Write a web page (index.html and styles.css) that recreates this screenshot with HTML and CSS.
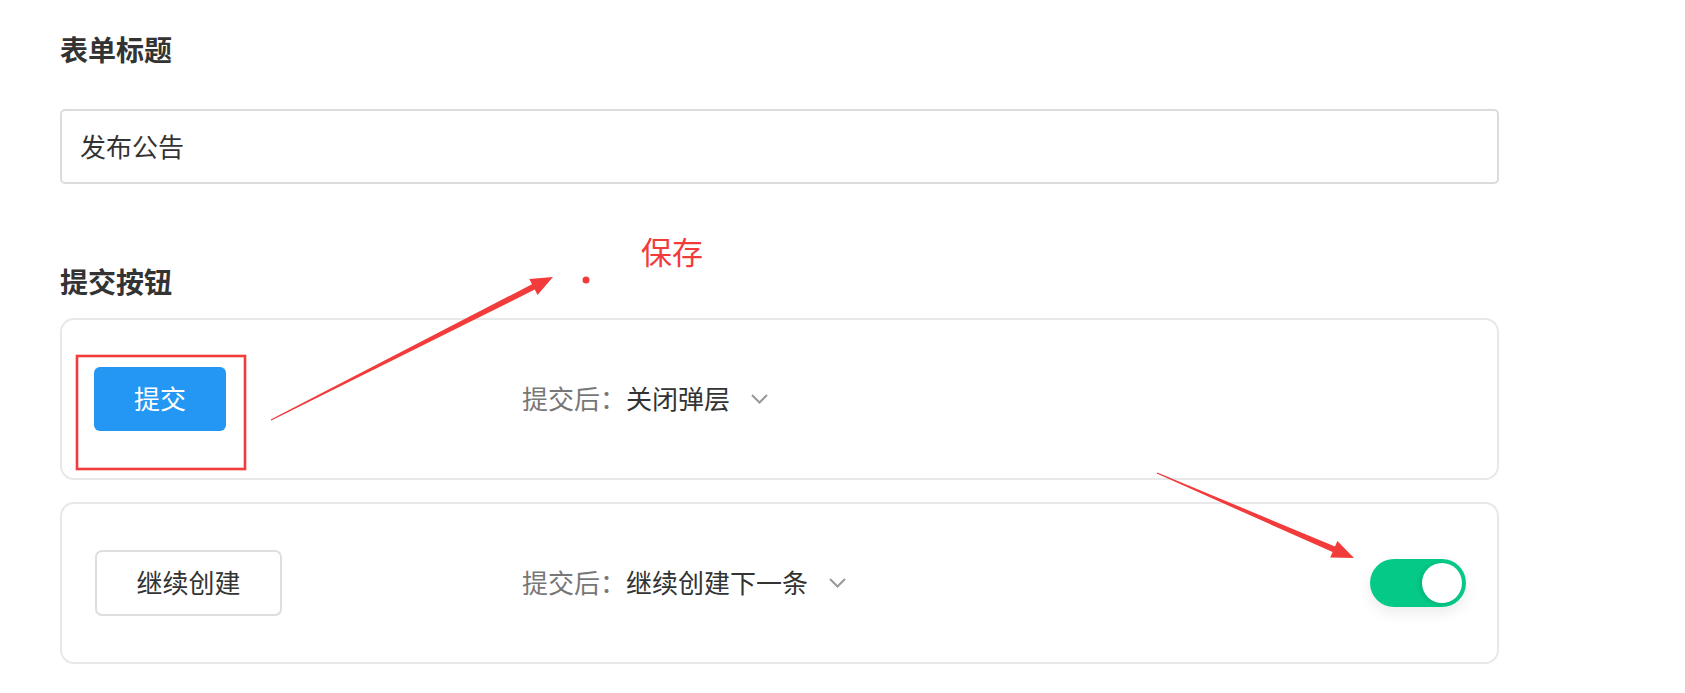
FILE: index.html
```html
<!DOCTYPE html>
<html lang="zh-CN">
<head>
<meta charset="utf-8">
<title>表单设置</title>
<link rel="stylesheet" href="styles.css">
</head>
<body>
<div class="page">
  <div class="content">
    <section class="field">
      <h2 class="field-title">表单标题</h2>
      <div class="text-input">发布公告</div>
    </section>
    <section class="field field-buttons">
      <h2 class="field-title">提交按钮</h2>
      <div class="card-list">
        <div class="btn-card">
          <div class="btn-cell"><button class="btn btn-primary">提交</button></div>
          <div class="after">提交后：<span class="value">关闭弹层</span>
            <svg class="chevron" viewBox="0 0 17 10" width="17" height="10"><path d="M1 1 L8.5 8.5 L16 1" fill="none" stroke="#999" stroke-width="2"/></svg>
          </div>
          <div class="tail"></div>
        </div>
        <div class="btn-card">
          <div class="btn-cell"><button class="btn btn-default">继续创建</button></div>
          <div class="after">提交后：<span class="value">继续创建下一条</span>
            <svg class="chevron" viewBox="0 0 17 10" width="17" height="10"><path d="M1 1 L8.5 8.5 L16 1" fill="none" stroke="#999" stroke-width="2"/></svg>
          </div>
          <div class="tail"><div class="switch on"><span class="knob"></span></div></div>
        </div>
      </div>
    </section>
  </div>

  <svg class="annotations" width="1685" height="693" viewBox="0 0 1685 693">
    <rect x="77" y="356" width="168" height="113" fill="none" stroke="#f23b3b" stroke-width="2.6"/>
    <polygon fill="#f23b3b" points="270.7,419.5 532.0,284.2 529.3,278.9 553,277 537.5,294.9 534.8,289.6 271.3,420.5"/>
    <polygon fill="#f23b3b" points="1157.3,472.4 1335.0,546.5 1337.4,541.0 1354,558 1330.2,557.6 1332.6,552.1 1156.7,473.6"/>
    <circle cx="586" cy="280" r="3.5" fill="#f23b3b"/>
  </svg>
  <div class="note">保存</div>
</div>
</body>
</html>
```

FILE: styles.css
```css
html, body {
  margin: 0;
  padding: 0;
  background: #fff;
}

body {
  font-family: "Noto Sans CJK SC", "Noto Sans", sans-serif;
  color: #333;
}

.page {
  position: relative;
  width: 1685px;
  height: 693px;
  box-sizing: border-box;
  padding: 29px 0 0 60px;
  overflow: hidden;
}

.content {
  width: 1439px;
}

.field-title {
  margin: 0;
  font-size: 28px;
  line-height: 40px;
  font-weight: 700;
  color: #333;
}

.text-input {
  margin-top: 40px;
  height: 75px;
  box-sizing: border-box;
  border: 2px solid #dcdcdc;
  border-radius: 5px;
  padding: 0 18px 3px;
  display: flex;
  align-items: center;
  font-size: 26px;
  color: #333;
}

.field-buttons {
  margin-top: 77px;
}

.card-list {
  margin-top: 17px;
  display: flex;
  flex-direction: column;
  gap: 22px;
}

.btn-card {
  height: 162px;
  box-sizing: border-box;
  border: 2px solid #e8e8e8;
  border-radius: 14px;
  display: grid;
  grid-template-columns: 428px 1fr auto;
  align-items: center;
  padding: 0 31px 0 32px;
}

.btn-cell {
  display: flex;
  align-items: center;
}

.btn {
  font-family: inherit;
  font-size: 26px;
  line-height: 1;
  padding: 0 0 2px;
  margin: 0;
  cursor: pointer;
  box-sizing: border-box;
}

.btn-primary {
  width: 132px;
  height: 64px;
  background: #2397f3;
  color: #fff;
  border: none;
  border-radius: 6px;
}

.btn-default {
  width: 187px;
  height: 66px;
  margin-left: 1px;
  background: #fff;
  color: #333;
  border: 2px solid #dedede;
  border-radius: 7px;
}

.after {
  display: flex;
  align-items: center;
  font-size: 26px;
  line-height: 40px;
  color: #777;
  padding-bottom: 2px;
}

.after .value {
  color: #333;
}

.chevron {
  margin-left: 21px;
  margin-top: 1px;
}

.tail {
  display: flex;
  align-items: center;
}

.switch {
  width: 96px;
  height: 48px;
  box-sizing: border-box;
  padding: 4px;
  border-radius: 24px;
  background: #e0e0e0;
  display: flex;
  justify-content: flex-start;
  box-shadow: 0 6px 14px rgba(0, 0, 0, 0.08);
}

.switch.on {
  background: #05c986;
  justify-content: flex-end;
}

.knob {
  width: 40px;
  height: 40px;
  border-radius: 50%;
  background: #fff;
  box-shadow: -2px 1px 4px rgba(0, 0, 0, 0.12);
}

.annotations {
  position: absolute;
  left: 0;
  top: 0;
  pointer-events: none;
}

.note {
  position: absolute;
  left: 641px;
  top: 229px;
  font-size: 31px;
  line-height: 44px;
  color: #f23b3b;
}
```
